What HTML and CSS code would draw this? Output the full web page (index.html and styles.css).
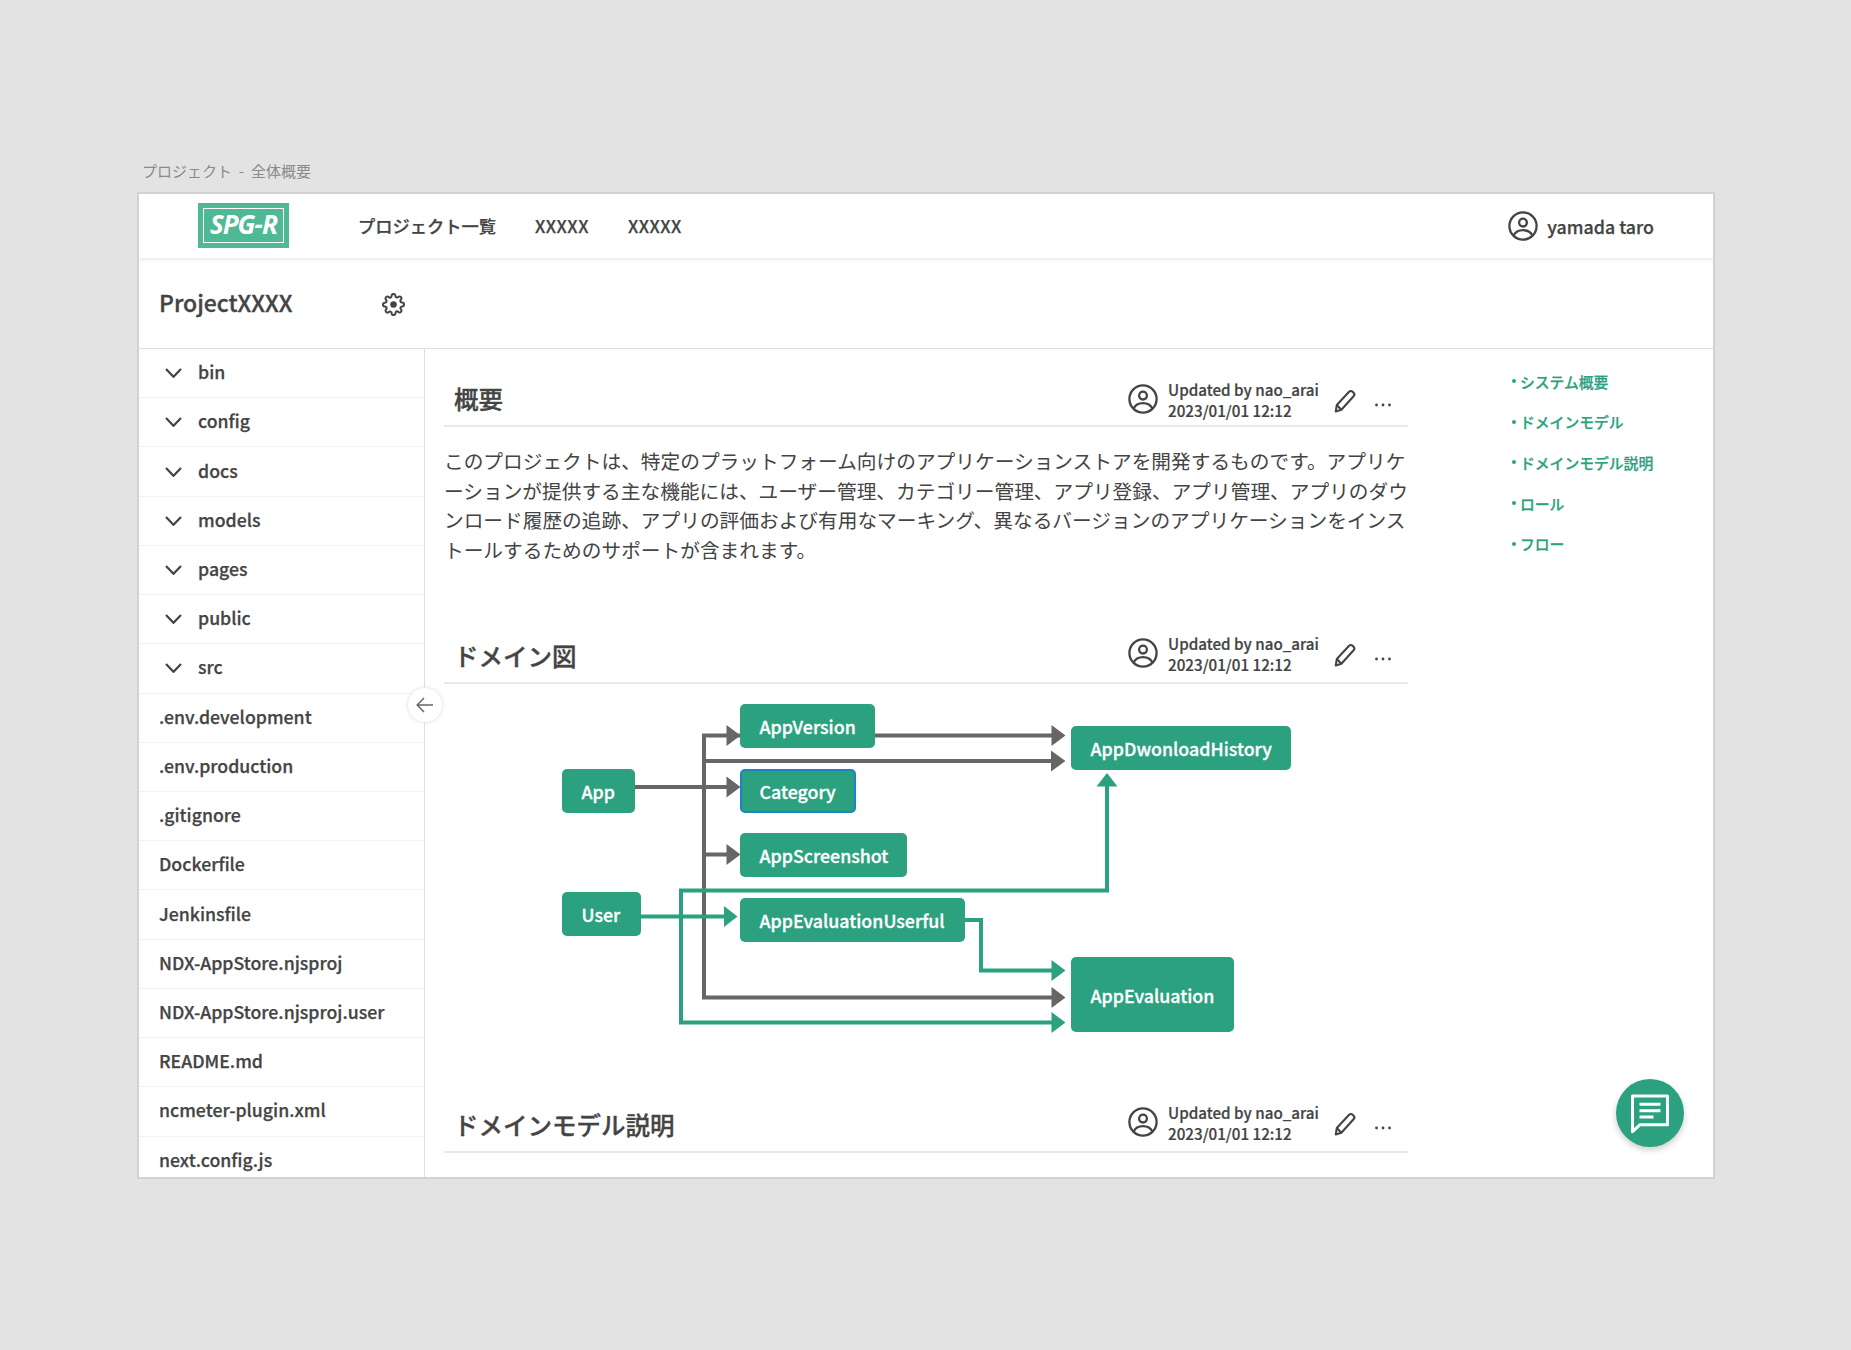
FILE: index.html
```html
<!DOCTYPE html>
<html lang="ja">
<head>
<meta charset="utf-8">
<title>プロジェクト - 全体概要</title>
<link rel="stylesheet" href="styles.css">
</head>
<body>
<svg class="defs" width="0" height="0" aria-hidden="true">
  <symbol id="user" viewBox="0 0 30 30">
    <circle cx="15" cy="15" r="13.6" fill="none" stroke="currentColor" stroke-width="2.3"/>
    <circle cx="15" cy="11.6" r="3.9" fill="none" stroke="currentColor" stroke-width="2.3"/>
    <path d="M5.6 24.6c1.6-3.6 5-5.4 9.4-5.4s7.8 1.8 9.4 5.4" fill="none" stroke="currentColor" stroke-width="2.3"/>
  </symbol>
  <symbol id="pen" viewBox="0 0 24 24">
    <path d="M3.6 21.6l1-6.2L16.4 2.7c1-1 2.4-1 3.4 0l.9.9c1 1 1 2.4 0 3.4L9 19.9z" fill="none" stroke="currentColor" stroke-width="2" stroke-linejoin="round"/>
    <path d="M4.6 15.4L9 19.9" fill="none" stroke="currentColor" stroke-width="2"/>
  </symbol>
  <symbol id="dots" viewBox="0 0 18 6">
    <circle cx="2.5" cy="3" r="1.4" fill="currentColor"/>
    <circle cx="9" cy="3" r="1.4" fill="currentColor"/>
    <circle cx="15.5" cy="3" r="1.4" fill="currentColor"/>
  </symbol>
  <symbol id="chev" viewBox="0 0 17 10">
    <path d="M1 1l7.5 7.8L16 1" fill="none" stroke="currentColor" stroke-width="2.2"/>
  </symbol>
</svg>

<div class="breadcrumb">プロジェクト - 全体概要</div>

<div class="frame">
  <header class="topbar">
    <div class="logo"><span class="logo-inner">SPG-R</span></div>
    <nav class="nav">
      <a>プロジェクト一覧</a>
      <a class="nav-x">XXXXX</a>
      <a class="nav-x">XXXXX</a>
    </nav>
    <div class="account">
      <svg class="icon-user"><use href="#user"/></svg>
      <span>yamada taro</span>
    </div>
  </header>

  <div class="projectbar">
    <h1 class="project-name">ProjectXXXX</h1>
    <svg class="gear" viewBox="0 0 24 24">
      <path d="M19.4 15a1.65 1.65 0 0 0 .33 1.82l.06.06a2 2 0 0 1 0 2.83 2 2 0 0 1-2.83 0l-.06-.06a1.65 1.65 0 0 0-1.82-.33 1.65 1.65 0 0 0-1 1.51V21a2 2 0 0 1-2 2 2 2 0 0 1-2-2v-.09A1.65 1.65 0 0 0 9 19.4a1.65 1.65 0 0 0-1.82.33l-.06.06a2 2 0 0 1-2.83 0 2 2 0 0 1 0-2.83l.06-.06a1.65 1.65 0 0 0 .33-1.82 1.65 1.65 0 0 0-1.51-1H3a2 2 0 0 1-2-2 2 2 0 0 1 2-2h.09A1.65 1.65 0 0 0 4.6 9a1.65 1.65 0 0 0-.33-1.82l-.06-.06a2 2 0 0 1 0-2.83 2 2 0 0 1 2.83 0l.06.06a1.65 1.65 0 0 0 1.82.33H9a1.65 1.65 0 0 0 1-1.51V3a2 2 0 0 1 2-2 2 2 0 0 1 2 2v.09a1.65 1.65 0 0 0 1 1.51 1.65 1.65 0 0 0 1.82-.33l.06-.06a2 2 0 0 1 2.83 0 2 2 0 0 1 0 2.83l-.06.06a1.65 1.65 0 0 0-.33 1.82V9a1.65 1.65 0 0 0 1.51 1H21a2 2 0 0 1 2 2 2 2 0 0 1-2 2h-.09a1.65 1.65 0 0 0-1.51 1z" fill="none" stroke="currentColor" stroke-width="2.1"/>
      <circle cx="12" cy="12" r="3.4" fill="currentColor"/>
    </svg>
  </div>

  <div class="workspace">
    <aside class="sidebar">
      <div class="row"><svg class="chev"><use href="#chev"/></svg>bin</div>
      <div class="row"><svg class="chev"><use href="#chev"/></svg>config</div>
      <div class="row"><svg class="chev"><use href="#chev"/></svg>docs</div>
      <div class="row"><svg class="chev"><use href="#chev"/></svg>models</div>
      <div class="row"><svg class="chev"><use href="#chev"/></svg>pages</div>
      <div class="row"><svg class="chev"><use href="#chev"/></svg>public</div>
      <div class="row"><svg class="chev"><use href="#chev"/></svg>src</div>
      <div class="row">.env.development</div>
      <div class="row">.env.production</div>
      <div class="row">.gitignore</div>
      <div class="row">Dockerfile</div>
      <div class="row">Jenkinsfile</div>
      <div class="row">NDX-AppStore.njsproj</div>
      <div class="row">NDX-AppStore.njsproj.user</div>
      <div class="row">README.md</div>
      <div class="row">ncmeter-plugin.xml</div>
      <div class="row">next.config.js</div>
    </aside>

    <button class="collapse" aria-label="閉じる">
      <svg viewBox="0 0 18 16" width="18" height="16"><path d="M8 1L1.2 8 8 15M1.5 8H17" fill="none" stroke="currentColor" stroke-width="1.5"/></svg>
    </button>

    <main class="main">
      <section>
        <div class="head head-first">
          <h2 class="title">概要</h2>
          <div class="meta">
            <svg class="icon-user"><use href="#user"/></svg>
            <div class="meta-text"><div>Updated by nao_arai</div><div>2023/01/01 12:12</div></div>
            <svg class="pen"><use href="#pen"/></svg>
            <svg class="dots"><use href="#dots"/></svg>
          </div>
        </div>
        <p class="body-text">このプロジェクトは、特定のプラットフォーム向けのアプリケーションストアを開発するものです。アプリケーションが提供する主な機能には、ユーザー管理、カテゴリー管理、アプリ登録、アプリ管理、アプリのダウンロード履歴の追跡、アプリの評価および有用なマーキング、異なるバージョンのアプリケーションをインストールするためのサポートが含まれます。</p>
      </section>

      <section>
        <div class="head head-gap">
          <h2 class="title">ドメイン図</h2>
          <div class="meta">
            <svg class="icon-user"><use href="#user"/></svg>
            <div class="meta-text"><div>Updated by nao_arai</div><div>2023/01/01 12:12</div></div>
            <svg class="pen"><use href="#pen"/></svg>
            <svg class="dots"><use href="#dots"/></svg>
          </div>
        </div>
        <div class="diagram">
          <svg class="wires" viewBox="444 684 964 409" width="964" height="409">
            <g class="wire-gray">
              <path d="M740 735.5H704V997.5H1055"/>
              <path d="M875 735.5H1055"/>
              <path d="M704 761H1055"/>
              <path d="M634 787H730"/>
              <path d="M704 854.5H730"/>
            </g>
            <g class="head-gray">
              <path d="M740.5 735.5L726.5 725V746Z"/>
              <path d="M1065.5 735.5L1051.5 725V746Z"/>
              <path d="M1065.5 761L1051 750.5V771.5Z"/>
              <path d="M740.5 787L726.5 776.5V797.5Z"/>
              <path d="M740.5 854.5L726.5 844V865Z"/>
              <path d="M1065.5 997.5L1051.5 987V1008Z"/>
            </g>
            <g class="wire-green">
              <path d="M1055 1022.5H681V890.5H1107V784"/>
              <path d="M640 916.5H728"/>
              <path d="M965 920H981V970.5H1055"/>
            </g>
            <g class="head-green">
              <path d="M1107 773L1096.5 786.5H1117.5Z"/>
              <path d="M737.5 916.5L724 906V927Z"/>
              <path d="M1065.5 970.5L1051.5 960V981Z"/>
              <path d="M1065.5 1022.5L1051.5 1012V1033Z"/>
            </g>
          </svg>
          <div class="node n-version">AppVersion</div>
          <div class="node n-app">App</div>
          <div class="node n-category">Category</div>
          <div class="node n-screenshot">AppScreenshot</div>
          <div class="node n-user">User</div>
          <div class="node n-useful">AppEvaluationUserful</div>
          <div class="node n-history">AppDwonloadHistory</div>
          <div class="node n-eval">AppEvaluation</div>
        </div>
      </section>

      <section>
        <div class="head">
          <h2 class="title">ドメインモデル説明</h2>
          <div class="meta">
            <svg class="icon-user"><use href="#user"/></svg>
            <div class="meta-text"><div>Updated by nao_arai</div><div>2023/01/01 12:12</div></div>
            <svg class="pen"><use href="#pen"/></svg>
            <svg class="dots"><use href="#dots"/></svg>
          </div>
        </div>
      </section>
    </main>

    <nav class="toc">
      <a>システム概要</a>
      <a>ドメインモデル</a>
      <a>ドメインモデル説明</a>
      <a>ロール</a>
      <a>フロー</a>
    </nav>
  </div>

  <button class="fab" aria-label="コメント">
    <svg viewBox="0 0 36 36" width="42" height="42">
      <path d="M3 3.5h30v24.5H9.5L3 34z" fill="none" stroke="#fff" stroke-width="2.6" stroke-linejoin="round"/>
      <path d="M9 10.5h18M9 16h18M9 21.5h12" fill="none" stroke="#fff" stroke-width="2.6"/>
    </svg>
  </button>
</div>
</body>
</html>
```

FILE: styles.css
```css
* { box-sizing: border-box; }
html, body { margin: 0; padding: 0; }
body {
  background: #e3e3e3;
  height: 1350px;
  padding: 160px 136px 0 137px;
  font-family: "Noto Sans CJK JP", "Noto Sans", sans-serif;
  color: #444;
  overflow: hidden;
}
.defs { position: absolute; }

.breadcrumb {
  height: 32px;
  padding-left: 5px;
  font-size: 15px;
  line-height: 21px;
  color: #8a8a8a;
  word-spacing: 3.5px;
}

.frame {
  position: relative;
  width: 1578px;
  height: 987px;
  background: #fff;
  border: 2px solid #d2d2d2;
  overflow: hidden;
  display: flex;
  flex-direction: column;
}

.topbar {
  flex: none;
  position: relative;
  z-index: 1;
  height: 64px;
  display: flex;
  align-items: center;
  padding: 0 59px 1px;
  background: #fff;
  box-shadow: 0 2px 4px rgba(0, 0, 0, .09);
}
.logo {
  align-self: flex-start;
  width: 91px;
  height: 45px;
  margin-top: 9px;
  padding: 5px;
  background: #4fb894;
}
.logo-inner {
  display: block;
  height: 35px;
  border: 1.5px solid #fff;
  color: #fff;
  font-family: "Noto Sans", sans-serif;
  font-size: 26px;
  font-weight: 700;
  font-style: italic;
  line-height: 31px;
  text-align: center;
  letter-spacing: -1px;
}
.nav {
  display: flex;
  gap: 39px;
  margin-left: 69px;
  font-size: 17.25px;
  font-weight: 500;
  -webkit-text-stroke: .25px currentColor;
}
.nav-x { letter-spacing: .5px; }
.account {
  margin-left: auto;
  display: flex;
  align-items: center;
  gap: 9px;
  font-size: 17.8px;
  font-weight: 500;
  -webkit-text-stroke: .25px currentColor;
}
.icon-user { width: 30px; height: 30px; flex: none; }

.projectbar {
  flex: none;
  height: 91px;
  display: flex;
  align-items: center;
  padding-left: 20px;
  border-bottom: 1px solid #dedede;
}
.project-name {
  margin: -2px 0 0;
  width: 223px;
  font-size: 23px;
  font-weight: 500;
  -webkit-text-stroke: .35px currentColor;
}
.gear { width: 23px; height: 23px; margin-top: 2px; }

.workspace {
  flex: 1;
  min-height: 0;
  position: relative;
  display: flex;
}

.sidebar {
  flex: none;
  width: 286px;
  border-right: 1px solid #dedede;
  overflow: hidden;
}
.row {
  height: 49.22px;
  display: flex;
  align-items: center;
  padding: 0 0 4px 20px;
  border-bottom: 1px solid #f2f2f2;
  font-size: 17.7px;
  font-weight: 500;
  white-space: nowrap;
  -webkit-text-stroke: .25px currentColor;
}
.chev { width: 17px; height: 10px; margin: 4px 16px 0 6px; flex: none; }

.collapse {
  position: absolute;
  left: 268px;
  top: 338px;
  width: 36px;
  height: 36px;
  padding: 0;
  display: flex;
  align-items: center;
  justify-content: center;
  border: 1px solid #eee;
  border-radius: 50%;
  background: #fff;
  color: #666;
  box-shadow: 0 0 4px rgba(0, 0, 0, .08);
}

.main {
  flex: none;
  width: 1071px;
  padding-left: 19px;
  overflow: hidden;
}
.main section { width: 964px; }

.head {
  height: 60px;
  display: flex;
  align-items: flex-end;
  padding: 0 16px 0 10px;
  border-bottom: 2px solid #e8e8e8;
}
.head-first { height: 78px; }
.head-gap { margin-top: 60px; }
.title {
  margin: 0;
  padding-bottom: 9px;
  font-size: 24.5px;
  line-height: 34px;
  font-weight: 500;
  -webkit-text-stroke: .35px currentColor;
}
.meta {
  margin-left: auto;
  display: flex;
  align-items: center;
  padding-bottom: 8px;
}
.head-first .meta { padding-bottom: 5px; }
.meta .icon-user { margin: -2px 0 0 1px; }
.meta-text {
  margin-left: 10px;
  width: 152px;
  font-size: 15.2px;
  line-height: 20.5px;
  font-weight: 500;
  white-space: nowrap;
  -webkit-text-stroke: .2px currentColor;
}
.pen { width: 25px; height: 25px; margin: 4px 0 0 12px; }
.dots { width: 18px; height: 6px; margin: 11px 0 0 17px; }

.body-text {
  margin: 19px -4px 0 0;
  font-size: 19.7px;
  line-height: 29.5px;
  font-weight: 400;
}

.diagram { position: relative; height: 409px; }
.wires { position: absolute; left: 0; top: 0; }
.wire-gray path { fill: none; stroke: #666; stroke-width: 4; }
.head-gray path { fill: #666; }
.wire-green path { fill: none; stroke: #2ba17f; stroke-width: 4; }
.head-green path { fill: #2ba17f; }

.node {
  position: absolute;
  display: flex;
  align-items: center;
  padding-left: 19.5px;
  border-radius: 5px;
  background: #2ba17f;
  color: #fff;
  font-size: 17.8px;
  font-weight: 500;
  white-space: nowrap;
  -webkit-text-stroke: .3px currentColor;
}
.n-version    { left: 296px; top: 20px;  width: 135px; height: 44px; }
.n-app        { left: 118px; top: 85px;  width: 73px;  height: 44px; }
.n-category   { left: 296px; top: 85px;  width: 116px; height: 44px; border: 2px solid #1e82c8; padding-left: 17.5px; }
.n-screenshot { left: 296px; top: 149px; width: 167px; height: 44px; }
.n-user       { left: 118px; top: 208px; width: 79px;  height: 44px; }
.n-useful     { left: 296px; top: 214px; width: 225px; height: 44px; }
.n-history    { left: 627px; top: 42px;  width: 220px; height: 44px; }
.n-eval       { left: 627px; top: 273px; width: 163px; height: 75px; }

.toc {
  flex: none;
  display: flex;
  flex-direction: column;
  padding: 12px 0 0 16px;
  font-size: 14.8px;
  font-weight: 500;
  color: #2ba17f;
  -webkit-text-stroke: .25px currentColor;
}
.toc a {
  height: 40.6px;
  display: flex;
  align-items: center;
  gap: 4px;
}
.toc a::before {
  content: "";
  width: 4px;
  height: 4px;
  border-radius: 50%;
  background: #2ba17f;
}

.fab {
  position: absolute;
  right: 29px;
  bottom: 30px;
  width: 68px;
  height: 68px;
  padding: 0;
  display: flex;
  align-items: center;
  justify-content: center;
  border: 0;
  border-radius: 50%;
  background: #2ba17f;
  box-shadow: 0 3px 6px rgba(0, 0, 0, .2);
}
```
